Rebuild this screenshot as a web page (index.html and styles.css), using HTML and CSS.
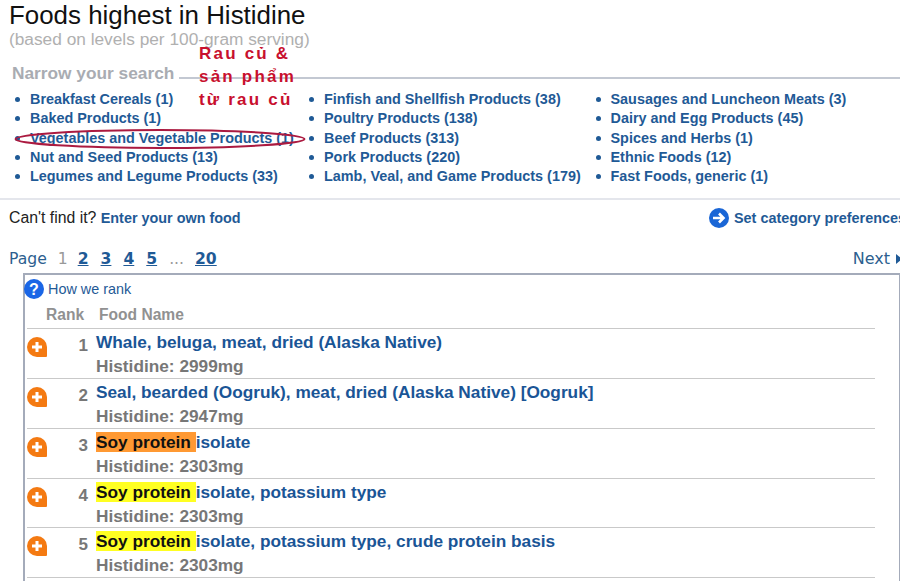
FILE: index.html
```html
<!DOCTYPE html>
<html lang="en">
<head>
    <meta charset="UTF-8">
    <meta name="viewport" content="width=device-width, initial-scale=1.0">
    <title>Foods highest in Histidine</title>
    <link rel="stylesheet" href="styles.css">
</head>
<body>
    <div class="page">
        <h1>Foods highest in Histidine</h1>
        <p class="subtitle">(based on levels per 100-gram serving)</p>

        <div class="narrow-head">
            <span class="narrow-title">Narrow your search</span>
            <span class="narrow-rule"></span>
        </div>

        <div class="categories">
            <ul class="col-1">
                <li><a href="#">Breakfast Cereals (1)</a></li>
                <li><a href="#">Baked Products (1)</a></li>
                <li><a href="#">Vegetables and Vegetable Products (1)</a></li>
                <li><a href="#">Nut and Seed Products (13)</a></li>
                <li><a href="#">Legumes and Legume Products (33)</a></li>
            </ul>
            <ul class="col-2">
                <li><a href="#">Finfish and Shellfish Products (38)</a></li>
                <li><a href="#">Poultry Products (138)</a></li>
                <li><a href="#">Beef Products (313)</a></li>
                <li><a href="#">Pork Products (220)</a></li>
                <li><a href="#">Lamb, Veal, and Game Products (179)</a></li>
            </ul>
            <ul class="col-3">
                <li><a href="#">Sausages and Luncheon Meats (3)</a></li>
                <li><a href="#">Dairy and Egg Products (45)</a></li>
                <li><a href="#">Spices and Herbs (1)</a></li>
                <li><a href="#">Ethnic Foods (12)</a></li>
                <li><a href="#">Fast Foods, generic (1)</a></li>
            </ul>
        </div>

        <div class="find-row">
            <span class="find-text">Can't find it? <a href="#">Enter your own food</a></span>
            <a href="#" class="prefs">
                <svg width="20" height="20" viewBox="0 0 20 20">
                    <circle cx="10" cy="10" r="10" fill="#1a66d6"/>
                    <path d="M4 10h10M10 5.500l4.500 4.500-4.500 4.500" fill="none" stroke="#fff" stroke-width="2.600"/>
                </svg>
                Set category preferences
            </a>
        </div>

        <div class="pager">
            <div class="pages">
                <span>Page</span>
                <span class="current">1</span>
                <a href="#">2</a>
                <a href="#">3</a>
                <a href="#">4</a>
                <a href="#">5</a>
                <span class="dots">...</span>
                <a href="#">20</a>
            </div>
            <span class="next">Next <b class="next-arrow"></b></span>
        </div>

        <div class="results">
            <div class="how-rank">
                <svg width="20" height="20" viewBox="0 0 20 20">
                    <circle cx="10" cy="10" r="10" fill="#1a66e6"/>
                    <text x="10" y="15.500" text-anchor="middle" class="q-mark">?</text>
                </svg>
                <a href="#">How we rank</a>
            </div>
            <div class="table-head">
                <span class="th-rank">Rank</span>
                <span>Food Name</span>
            </div>

            <div class="food-row">
                <svg class="add" viewBox="0 0 20 20"><use href="#plus-icon"/></svg>
                <span class="rank">1</span>
                <div>
                    <div class="food-name">Whale, beluga, meat, dried (Alaska Native)</div>
                    <div class="food-val">Histidine: 2999mg</div>
                </div>
            </div>
            <div class="food-row">
                <svg class="add" viewBox="0 0 20 20"><use href="#plus-icon"/></svg>
                <span class="rank">2</span>
                <div>
                    <div class="food-name">Seal, bearded (Oogruk), meat, dried (Alaska Native) [Oogruk]</div>
                    <div class="food-val">Histidine: 2947mg</div>
                </div>
            </div>
            <div class="food-row">
                <svg class="add" viewBox="0 0 20 20"><use href="#plus-icon"/></svg>
                <span class="rank">3</span>
                <div>
                    <div class="food-name"><mark class="active">Soy protein </mark>isolate</div>
                    <div class="food-val">Histidine: 2303mg</div>
                </div>
            </div>
            <div class="food-row">
                <svg class="add" viewBox="0 0 20 20"><use href="#plus-icon"/></svg>
                <span class="rank">4</span>
                <div>
                    <div class="food-name"><mark>Soy protein </mark>isolate, potassium type</div>
                    <div class="food-val">Histidine: 2303mg</div>
                </div>
            </div>
            <div class="food-row">
                <svg class="add" viewBox="0 0 20 20"><use href="#plus-icon"/></svg>
                <span class="rank">5</span>
                <div>
                    <div class="food-name"><mark>Soy protein </mark>isolate, potassium type, crude protein basis</div>
                    <div class="food-val">Histidine: 2303mg</div>
                </div>
            </div>
            <div class="last-rule"></div>
        </div>

        <!-- red notes drawn over the page -->
        <div class="note">Rau củ &amp;<br>sản phẩm<br>từ rau củ</div>
        <svg class="ring" width="296" height="24" viewBox="0 0 296 24">
            <ellipse cx="148" cy="12" rx="144.500" ry="9" fill="none" stroke="#ab1a40" stroke-width="2"/>
        </svg>
    </div>

    <svg width="0" height="0" class="defs">
        <symbol id="plus-icon" viewBox="0 0 20 20">
            <path d="M10 0a10 10 0 0 1 10 10v9a1 1 0 0 1-1 1h-9a10 10 0 0 1 0-20z" fill="#f47a12"/>
            <path d="M10 5v10M5 10h10" stroke="#fff" stroke-width="3"/>
        </symbol>
    </svg>
</body>
</html>
```

FILE: styles.css
```css
html, body {
    margin: 0;
    padding: 0;
    background-color: #fff;
}

body {
    font-family: "Liberation Sans", Arial, sans-serif;
    color: #222;
}

a {
    color: #1f5a96;
    text-decoration: none;
}

.page {
    position: relative;
    width: 900px;
    height: 581px;
    overflow: hidden;
}

.defs {
    position: absolute;
}

h1 {
    margin: 0;
    padding: 1px 0 0 9px;
    height: 29px;
    font-size: 25.900px;
    line-height: 28px;
    font-weight: normal;
    color: #111;
}

.subtitle {
    margin: 0;
    padding-left: 9px;
    font-size: 17.300px;
    line-height: 19px;
    color: #b0b0b0;
}

.narrow-head {
    display: flex;
    align-items: center;
    margin-top: 12px;
    padding-left: 12px;
    height: 24px;
}

.narrow-title {
    font-size: 17.300px;
    font-weight: bold;
    color: #a9acb2;
}

.narrow-rule {
    flex: 1;
    height: 2px;
    margin: 10px 0 0 5px;
    background-color: #c3c8d2;
}

.categories {
    display: flex;
    margin-top: 5px;
    padding-bottom: 12px;
    border-bottom: 2px solid #e4e6ec;
}

.categories ul {
    margin: 0;
    padding: 0;
    list-style: none;
}

.categories li {
    position: relative;
    padding-left: 15px;
    font-size: 14.400px;
    line-height: 19.250px;
    font-weight: bold;
}

.categories li::before {
    content: "";
    position: absolute;
    left: 0;
    top: 7px;
    width: 5px;
    height: 5px;
    border-radius: 50%;
    background-color: #1f5a96;
}

.col-1 {
    margin-left: 15px !important;
    width: 294px;
}

.col-2 {
    width: 286.500px;
}

.find-row {
    display: flex;
    justify-content: space-between;
    align-items: center;
    margin-top: 7px;
    padding-left: 9px;
    height: 22px;
    font-size: 15.800px;
    white-space: nowrap;
}

.find-row a {
    font-size: 14.400px;
    font-weight: bold;
}

.prefs {
    display: flex;
    align-items: center;
    gap: 5px;
    margin-right: -6px;
}

.pager {
    display: flex;
    justify-content: space-between;
    align-items: center;
    margin-top: 18px;
    padding-left: 9px;
    height: 24px;
    font-family: "DejaVu Sans", Verdana, sans-serif;
    font-size: 15.600px;
    color: #2d5f8f;
}

.pages {
    display: flex;
    gap: 12px;
}

.pages a {
    font-weight: bold;
    color: #1f5a96;
    text-decoration: underline;
}

.current,
.dots {
    color: #999;
}

.current {
    margin: 0 -2px 0 -1px;
}

.dots {
    margin-right: -1px;
}

.next {
    display: flex;
    align-items: center;
    gap: 6px;
    margin: -1px -2px 0 0;
    font-size: 16px;
}

.next-arrow {
    width: 0;
    height: 0;
    border-left: 6px solid #1f5a96;
    border-top: 5px solid transparent;
    border-bottom: 5px solid transparent;
}

.results {
    margin: 2px 0 0 23px;
    height: 320px;
    border: 2px solid #a4abba;
    border-right-width: 1px;
    border-bottom: none;
}

.how-rank {
    display: flex;
    align-items: center;
    gap: 4px;
    height: 24px;
    margin: -2px 0 0 -1px;
    padding-top: 4px;
    font-size: 14.400px;
}

.q-mark {
    font-family: "Liberation Sans", Arial, sans-serif;
    font-size: 16px;
    font-weight: bold;
    fill: #fff;
}

.table-head {
    display: flex;
    height: 27px;
    align-items: center;
    padding-left: 21px;
    font-size: 15.600px;
    font-weight: bold;
    color: #919191;
}

.th-rank {
    width: 53px;
}

.food-row {
    display: flex;
    width: 848px;
    height: 48.800px;
    margin-left: 2px;
    border-top: 1px solid #c9c9c9;
}

.add {
    width: 20px;
    height: 20px;
    margin-top: 8px;
    flex: none;
}

.rank {
    width: 41px;
    padding-right: 8px;
    margin-top: 7px;
    text-align: right;
    font-size: 17px;
    line-height: 20px;
    font-weight: bold;
    color: #777;
}

.food-name {
    font-size: 17.250px;
    line-height: 20px;
    margin-top: 3px;
    font-weight: bold;
    color: #1a5596;
}

.food-val {
    margin-top: 4px;
    font-size: 17.250px;
    line-height: 20px;
    font-weight: bold;
    color: #777;
}

mark {
    background-color: #ffff22;
    color: #111;
}

mark.active {
    background-color: #ff9933;
}

.last-rule {
    width: 848px;
    margin-left: 2px;
    border-top: 1px solid #c9c9c9;
}

.note {
    position: absolute;
    left: 199px;
    top: 42px;
    font-size: 17px;
    line-height: 23px;
    font-weight: bold;
    letter-spacing: 2.200px;
    color: #c8102e;
}

.ring {
    position: absolute;
    left: 12px;
    top: 127px;
}
```
